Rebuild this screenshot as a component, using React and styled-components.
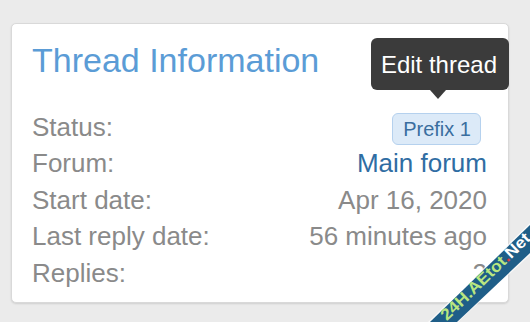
import React from "react";
import styled, { createGlobalStyle } from "styled-components";

const Global = createGlobalStyle`
  html, body { margin: 0; padding: 0; background: #ebebeb; }
  body { font-family: "Liberation Sans", Arial, sans-serif; }
`;

const Page = styled.div`
  position: relative;
  width: 530px;
  height: 322px;
  overflow: hidden;
  padding: 23px 0 0 11px;
  box-sizing: border-box;
`;

const Card = styled.section`
  width: 498px;
  height: 280px;
  box-sizing: border-box;
  background: #fff;
  border: 1px solid #d9d9d9;
  border-radius: 5px;
  box-shadow: 0 1px 2px rgba(0, 0, 0, 0.12);
  padding: 16px 21px 0 20px;
`;

const Title = styled.h3`
  margin: 0 0 28px 0;
  font-size: 34px;
  line-height: 41px;
  font-weight: 400;
  color: #5b9cd6;
`;

const List = styled.dl`
  margin: 0;
  font-size: 26px;
  line-height: 36.4px;
`;

const Row = styled.div`
  display: flex;
  justify-content: space-between;
  align-items: baseline;
`;

const Label = styled.dt`
  color: #8a8a8a;
`;

const Value = styled.dd`
  margin: 0;
  color: ${(p) => (p.$link ? "#2f6da3" : "#8a8a8a")};
`;

const BadgeWrap = styled.span`
  position: relative;
  display: inline-block;
  margin-right: 6px;
`;

const Badge = styled.span`
  display: inline-block;
  font-size: 20px;
  line-height: 30px;
  padding: 0 9px 0 10px;
  color: #3a6e9f;
  background: #dceaf8;
  border: 1px solid #b5d1ee;
  border-radius: 6px;
`;

const Tooltip = styled.span`
  position: absolute;
  right: -28px;
  bottom: calc(100% + 19px);
  height: 52px;
  padding: 0 12px 0 10px;
  white-space: nowrap;
  font-size: 24px;
  line-height: 54px;
  color: #fff;
  background: #3b3b3b;
  border-radius: 6px;

  &::after {
    content: "";
    position: absolute;
    left: 59px;
    top: 100%;
    border-left: 8px solid transparent;
    border-right: 8px solid transparent;
    border-top: 9px solid #3b3b3b;
  }
`;

const Watermark = styled.svg`
  position: absolute;
  left: 420px;
  top: 210px;
  width: 110px;
  height: 112px;
  pointer-events: none;
`;

const rows = [
  ["Forum:", "Main forum", true],
  ["Start date:", "Apr 16, 2020"],
  ["Last reply date:", "56 minutes ago"],
  ["Replies:", "2"],
];

export default function App() {
  return (
    <>
      <Global />
      <Page>
        <Card>
          <Title>Thread Information</Title>
          <List>
            <Row>
              <Label>Status:</Label>
              <Value>
                <BadgeWrap>
                  <Badge>Prefix 1</Badge>
                  <Tooltip>Edit thread</Tooltip>
                </BadgeWrap>
              </Value>
            </Row>
            {rows.map(([l, v, link]) => (
              <Row key={l}>
                <Label>{l}</Label>
                <Value $link={link}>{v}</Value>
              </Row>
            ))}
          </List>
        </Card>
        <Watermark viewBox="0 0 110 112">
          <polygon points="8,112 110,13 110,45 38,112" fill="#fff" opacity="0.7" />
          <polygon points="10,112 110,15 110,43 37,112" fill="#1f5e88" />
          <text
            x="65"
            y="66"
            transform="rotate(-44 65 66)"
            textAnchor="middle"
            dominantBaseline="central"
            fontFamily="'Liberation Sans', Arial, sans-serif"
            fontWeight="700"
            fontSize="16"
            textLength="118"
            lengthAdjust="spacingAndGlyphs"
          >
            <tspan fill="#b9e680">24H.AEtot</tspan>
            <tspan fill="#e23b3b">.</tspan>
            <tspan fill="#ffffff">Net</tspan>
          </text>
        </Watermark>
      </Page>
    </>
  );
}
